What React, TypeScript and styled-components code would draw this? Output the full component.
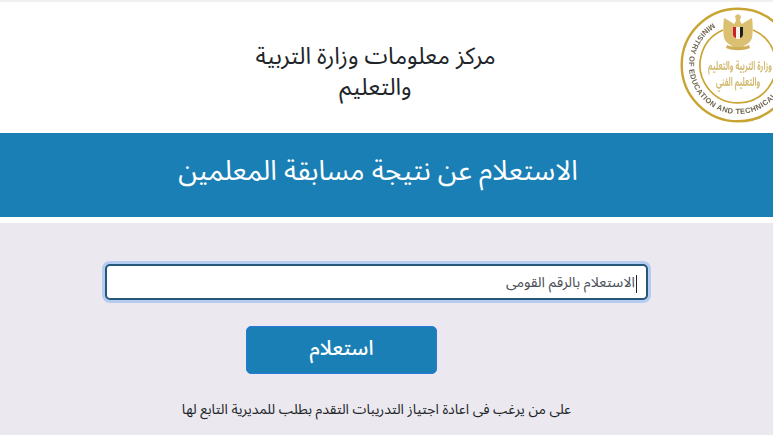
import { createGlobalStyle, styled } from 'styled-components'

const arabicStack = `"Noto Sans Arabic", "Noto Naskh Arabic", "DejaVu Sans", sans-serif`

const GlobalStyle = createGlobalStyle`
	html, body {
		margin: 0;
		padding: 0;
		background: #ebe9ef;
		overflow: hidden;
	}
	* {
		box-sizing: border-box;
	}
`

const Logo = () => (
	<LogoSvg width="124" height="124" viewBox="0 0 124 124" aria-hidden="true">
		<defs>
			<path id="seal-ring" d="M 62 13 A 49 49 0 1 0 62 111 A 49 49 0 1 0 62 13" />
		</defs>
		<circle cx="62" cy="62" r="56.3" fill="#fff" stroke="#c9a432" strokeWidth="2.4" />
		{/* inner ring stops either side of the eagle */}
		<path d="M47 27 A 38 38 0 1 0 77 27" fill="none" stroke="#c9a432" strokeWidth="1.7" />
		<text fontFamily='"Liberation Sans", sans-serif' fontSize="7.5" fontWeight="700" fill="#6f6650" letterSpacing="0.4">
			<textPath href="#seal-ring" startOffset="8.6%">
				MINISTRY OF EDUCATION AND TECHNICAL EDUCATION
			</textPath>
		</text>
		{/* eagle */}
		<path d="M59 13l3-2 3 2-1 5 2 3 3-2c3-2 5-3 7-4 1 6 1 14 0 20-1 3-4 6-8 8l-1 3h-10l-1-3c-4-2-7-5-8-8-1-6-1-14 0-20 2 1 4 2 7 4l3 2 2-3z" fill="#dcc071" />
		<path d="M57 24h3v11l-2-1-1-2z" fill="#c8202f" />
		<path d="M60 24h4v12h-4z" fill="#f6f3e6" />
		<path d="M64 24h3v8l-1 2-2 1z" fill="#1f1f1f" />
		<path d="M51 42c7 3 15 3 22 0l1 3c-7 3-17 3-24 0z" fill="#cfae58" />
		{/* calligraphy */}
		<text transform="translate(64 67) scale(1 1.6)" textAnchor="middle" direction="rtl" fontFamily={arabicStack} fontSize="7.4" fontWeight="700" fill="#d3bc76">
			وزارة التربية والتعليم
		</text>
		<text transform="translate(62 83) scale(1 1.6)" textAnchor="middle" direction="rtl" fontFamily={arabicStack} fontSize="7.4" fontWeight="700" fill="#d3bc76">
			والتعليم الفني
		</text>
	</LogoSvg>
)

const App = () => (
	<Page>
		<GlobalStyle />
		<Header>
			<HeaderTitle>
				مركز معلومات وزارة التربية
				<br />
				والتعليم
			</HeaderTitle>
			<LogoSlot>
				<Logo />
			</LogoSlot>
		</Header>
		<Banner>
			<BannerTitle>الاستعلام عن نتيجة مسابقة المعلمين</BannerTitle>
		</Banner>
		<Divider />
		<Content>
			<FieldWrap>
				<NationalIdField dir="rtl" placeholder="الاستعلام بالرقم القومى" />
				<Caret />
			</FieldWrap>
			<SubmitButton type="button">استعلام</SubmitButton>
			<Note dir="rtl">على من يرغب فى اعادة اجتياز التدريبات التقدم بطلب للمديرية التابع لها</Note>
		</Content>
	</Page>
)

export default App

const Page = styled.div`
	width: 773px;
	height: 435px;
	overflow: hidden;
	display: flex;
	flex-direction: column;
	background: #ebe9ef;
	font-family: ${arabicStack};
`

const Header = styled.header`
	height: 133px;
	flex: none;
	position: relative;
	display: flex;
	justify-content: center;
	align-items: center;
	padding: 9px 22px 0 0;
	background: #fff;
	border-top: 2px solid #f0f0f0;
`

const HeaderTitle = styled.h1`
	margin: 0;
	font-size: 23.5px;
	font-weight: 400;
	line-height: 31px;
	text-align: center;
	color: #212529;
`

const LogoSlot = styled.div`
	position: absolute;
	left: 676px;
	top: 1px;
`

const LogoSvg = styled.svg`
	display: block;
	filter: blur(0.45px);
`

const Banner = styled.div`
	height: 84px;
	flex: none;
	display: flex;
	justify-content: center;
	align-items: center;
	padding: 0 17px 8px 0;
	background: #1a7fb5;
`

const BannerTitle = styled.h2`
	margin: 0;
	font-size: 27.6px;
	font-weight: 400;
	color: #fff;
`

const Divider = styled.div`
	height: 6px;
	flex: none;
	background: #fff;
`

const Content = styled.main`
	flex: 1;
	display: flex;
	flex-direction: column;
	align-items: center;
	padding: 41px 20px 0 0;
`

const FieldWrap = styled.div`
	position: relative;
	width: 543px;
	height: 36px;
`

const NationalIdField = styled.input`
	display: block;
	width: 100%;
	height: 100%;
	padding: 0 11px 0 6px;
	border: 2px solid #24587a;
	border-radius: 5px;
	outline: none;
	box-shadow: 0 0 0 3px #b6cbf0;
	background: #fff;
	font-family: ${arabicStack};
	font-size: 14.3px;
	color: #495057;

	&::placeholder {
		color: #495057;
		opacity: 1;
	}
`

const Caret = styled.span`
	position: absolute;
	right: 11px;
	top: 11px;
	width: 1px;
	height: 18px;
	background: #212529;
`

const SubmitButton = styled.button`
	align-self: flex-start;
	width: 191px;
	height: 48px;
	margin: 26px 0 0 246px;
	padding: 0 0 5px;
	border: 1px solid #2a78dc;
	border-radius: 5px;
	background: #1a7fb5;
	font-family: ${arabicStack};
	font-size: 20.5px;
	font-weight: 500;
	color: #fff;
`

const Note = styled.p`
	margin: 26px 0 0;
	font-size: 14px;
	line-height: 20px;
	color: #212529;
`
